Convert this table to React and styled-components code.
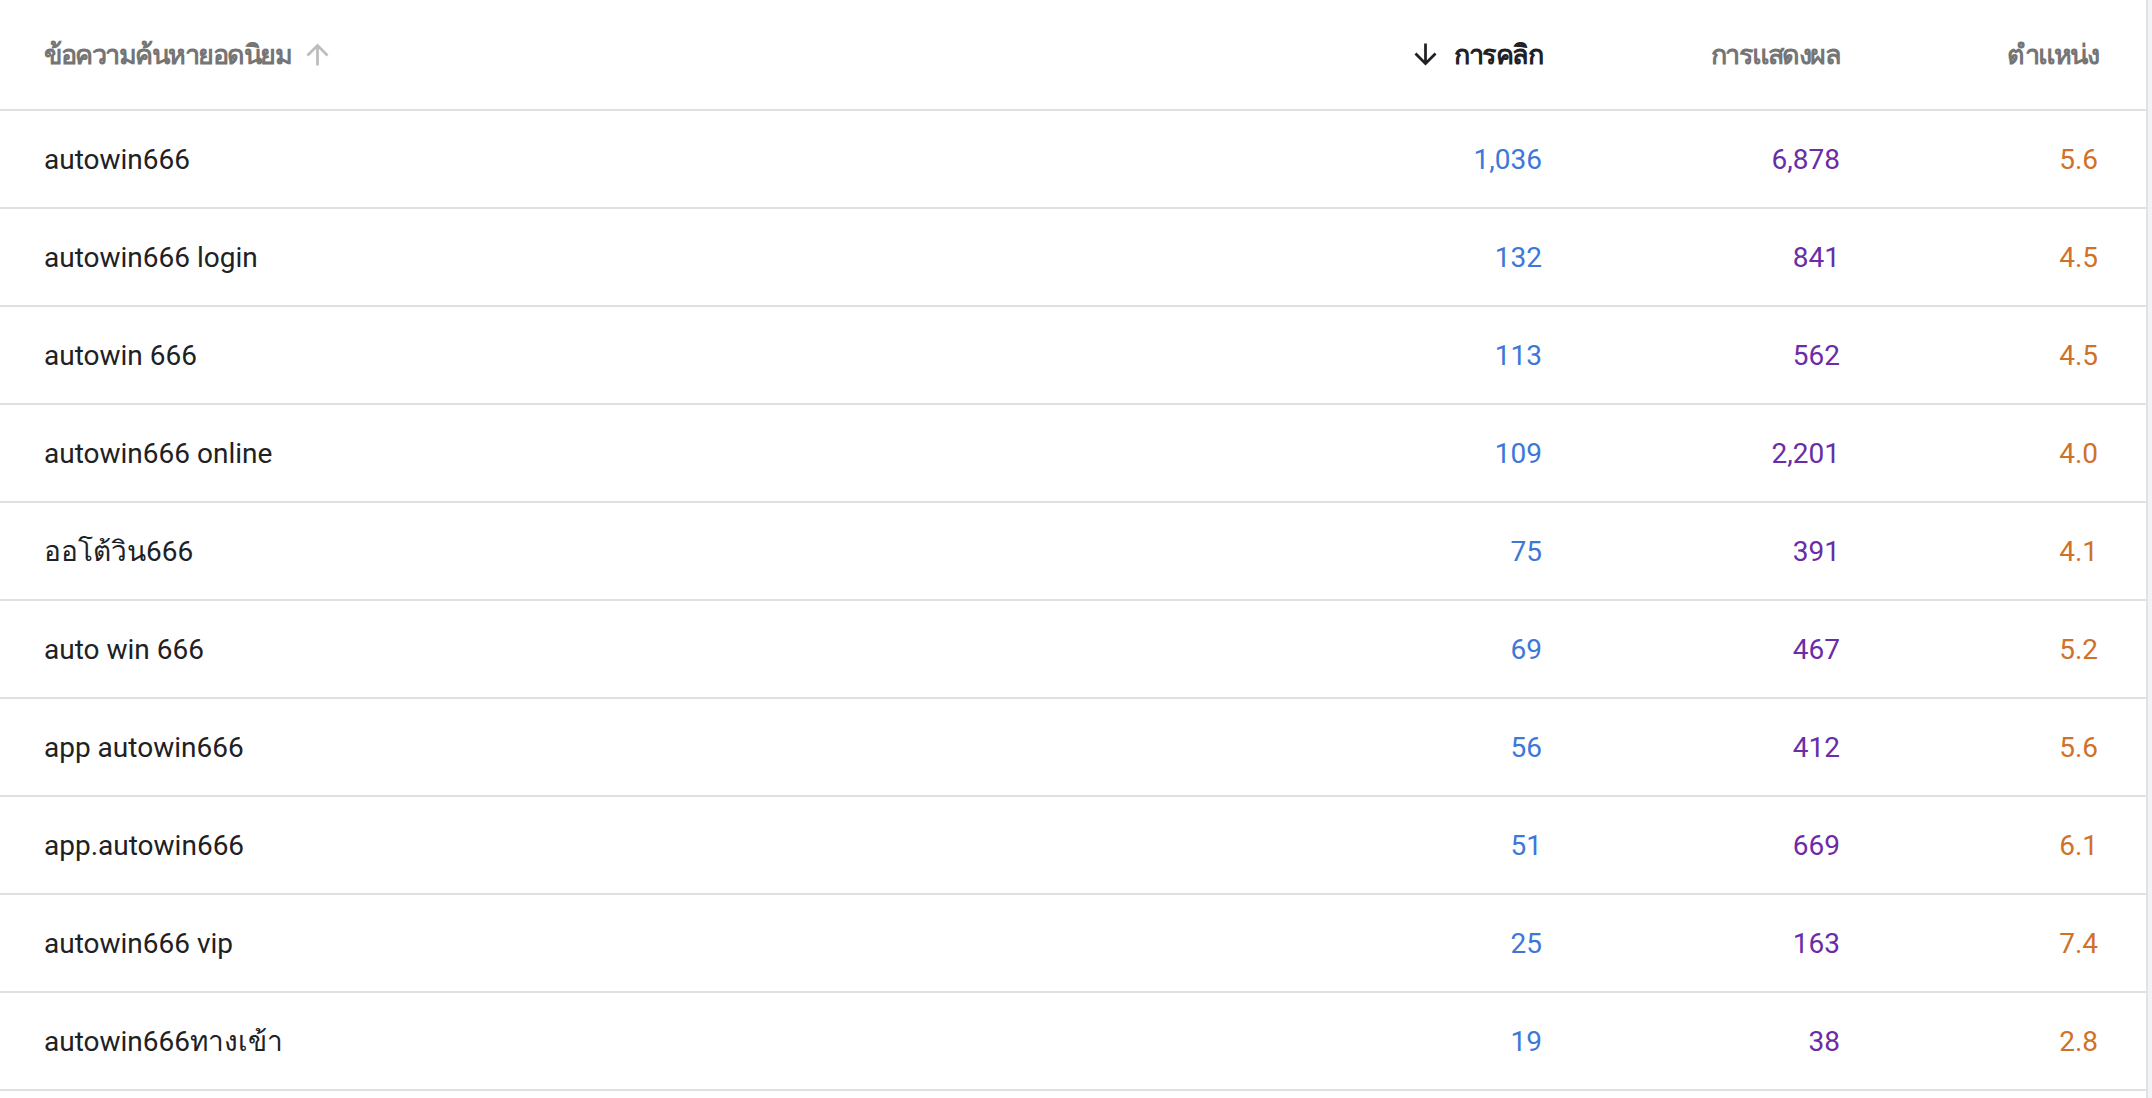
import React from "react";
import styled, { createGlobalStyle } from "styled-components";

const Global = createGlobalStyle`
  html, body { margin: 0; padding: 0; background: #f1f3f6; }
  body {
    font-family: Roboto, "Noto Sans", "DejaVu Sans", sans-serif;
  }
`;

const Card = styled.div`
  width: 2146px;
  min-height: 1098px;
  background: #ffffff;
  border-right: 2px solid #e2e2e2;
`;

const Row = styled.div`
  display: grid;
  grid-template-columns: 1fr 298px 298px 258px;
  align-items: center;
  height: ${(p) => (p.$header ? 109 : 96)}px;
  padding: 0 48px 0 44px;
  border-bottom: 2px solid #e0e0e0;
`;

const HeadCell = styled.div`
  display: flex;
  align-items: center;
  justify-content: ${(p) => (p.$left ? "flex-start" : "flex-end")};
  gap: ${(p) => (p.$left ? 10 : 12)}px;
  font-size: 27px;
  font-weight: 700;
  letter-spacing: -1.5px;
  color: ${(p) => (p.$active ? "#202124" : "#757575")};
`;

const Query = styled.div`
  font-size: 28px;
  color: #202124;
`;

const Num = styled.div`
  text-align: right;
  font-size: 28px;
  color: ${(p) => p.$color};
`;

const ArrowIcon = ({ up, color }) => (
  <svg width="33" height="33" viewBox="0 0 24 24" fill={color} style={{ transform: up ? "rotate(180deg)" : "none" }}>
    <path d="M20 12l-1.41-1.41L13 16.17V4h-2v12.17l-5.58-5.59L4 12l8 8 8-8z" />
  </svg>
);

const rows = [
  ["autowin666", "1,036", "6,878", "5.6"],
  ["autowin666 login", "132", "841", "4.5"],
  ["autowin 666", "113", "562", "4.5"],
  ["autowin666 online", "109", "2,201", "4.0"],
  ["ออโต้วิน666", "75", "391", "4.1"],
  ["auto win 666", "69", "467", "5.2"],
  ["app autowin666", "56", "412", "5.6"],
  ["app.autowin666", "51", "669", "6.1"],
  ["autowin666 vip", "25", "163", "7.4"],
  ["autowin666ทางเข้า", "19", "38", "2.8"],
];

export default function App() {
  return (
    <>
      <Global />
      <Card>
        <Row $header>
          <HeadCell $left>
            ข้อความค้นหายอดนิยม
            <ArrowIcon up color="#bdbdbd" />
          </HeadCell>
          <HeadCell $active>
            <ArrowIcon color="#202124" />
            การคลิก
          </HeadCell>
          <HeadCell>การแสดงผล</HeadCell>
          <HeadCell>ตำแหน่ง</HeadCell>
        </Row>
        {rows.map((r) => (
          <Row key={r[0]}>
            <Query>{r[0]}</Query>
            <Num $color="#3c78d8">{r[1]}</Num>
            <Num $color="#6a2ca8">{r[2]}</Num>
            <Num $color="#d0712a">{r[3]}</Num>
          </Row>
        ))}
      </Card>
    </>
  );
}
